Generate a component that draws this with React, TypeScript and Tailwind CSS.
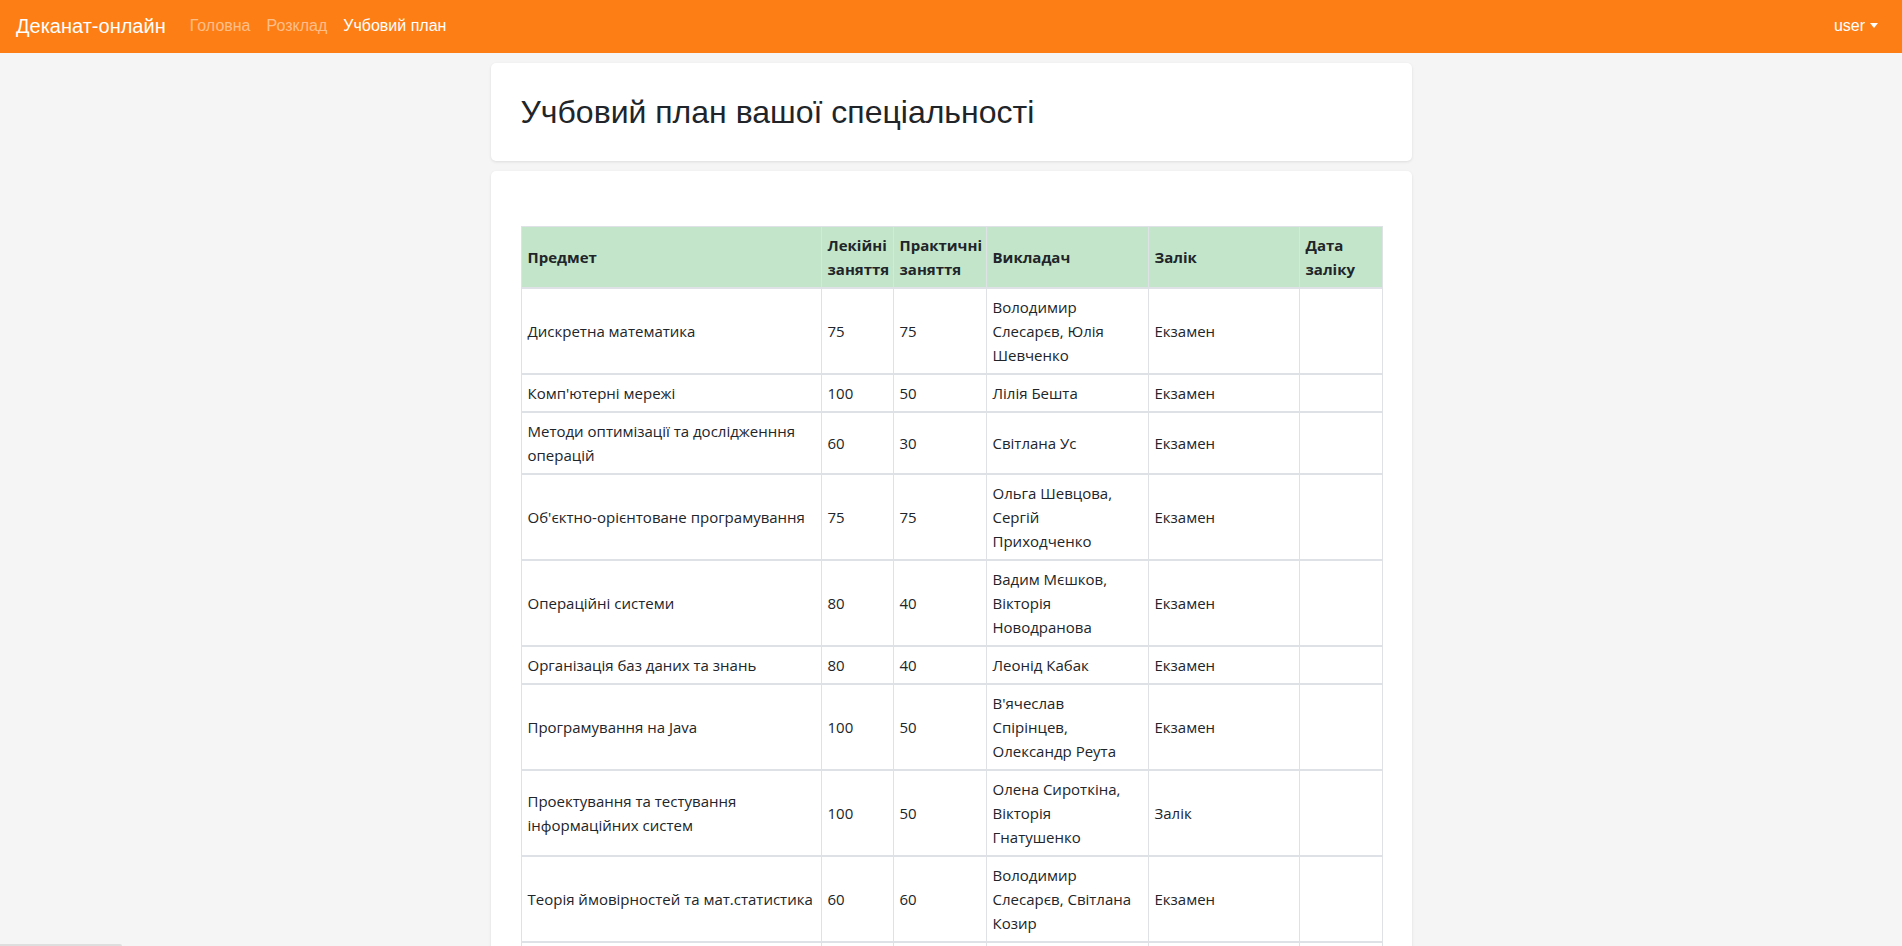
import React from "react";

type Row = { subject: string[]; lec: string; prac: string; teacher: string[]; exam: string };

const rows: Row[] = [
  { subject: ["Дискретна математика"], lec: "75", prac: "75", teacher: ["Володимир", "Слесарєв, Юлія", "Шевченко"], exam: "Екзамен" },
  { subject: ["Комп'ютерні мережі"], lec: "100", prac: "50", teacher: ["Лілія Бешта"], exam: "Екзамен" },
  { subject: ["Методи оптимізації та дослідженння", "операцій"], lec: "60", prac: "30", teacher: ["Світлана Ус"], exam: "Екзамен" },
  { subject: ["Об'єктно-орієнтоване програмування"], lec: "75", prac: "75", teacher: ["Ольга Шевцова,", "Сергій", "Приходченко"], exam: "Екзамен" },
  { subject: ["Операційні системи"], lec: "80", prac: "40", teacher: ["Вадим Мєшков,", "Вікторія", "Новодранова"], exam: "Екзамен" },
  { subject: ["Організація баз даних та знань"], lec: "80", prac: "40", teacher: ["Леонід Кабак"], exam: "Екзамен" },
  { subject: ["Програмування на Java"], lec: "100", prac: "50", teacher: ["В'ячеслав", "Спірінцев,", "Олександр Реута"], exam: "Екзамен" },
  { subject: ["Проектування та тестування", "інформаційних систем"], lec: "100", prac: "50", teacher: ["Олена Сироткіна,", "Вікторія", "Гнатушенко"], exam: "Залік" },
  { subject: ["Теорія ймовірностей та мат.статистика"], lec: "60", prac: "60", teacher: ["Володимир", "Слесарєв, Світлана", "Козир"], exam: "Екзамен" },
];

function Lines({ lines }: { lines: string[] }) {
  return (
    <>
      {lines.map((l, i) => (
        <React.Fragment key={i}>
          {i > 0 && <br />}
          {l}
        </React.Fragment>
      ))}
    </>
  );
}

const th = "border border-[#dee2e6] border-b-2 px-1.5 py-1.5 align-middle text-left font-bold whitespace-nowrap";
const td = "border border-[#dee2e6] border-t-2 px-1.5 py-1.5 align-middle whitespace-nowrap";

export default function App() {
  return (
    <div className="min-h-[946px] bg-[#f5f5f5]">
      <nav className="flex h-[53px] items-center bg-[#fd7e14] px-4 font-['Liberation_Sans',Arial,sans-serif]">
        <span className="mr-4 -mt-[2px] text-[20px] leading-[30px] text-white">Деканат-онлайн</span>
        <div className="-mt-[2px] flex items-center text-[16px] leading-6">
          <span className="px-2 text-white/50">Головна</span>
          <span className="px-2 text-white/50">Розклад</span>
          <span className="px-2 text-white">Учбовий план</span>
        </div>
        <div className="ml-auto -mt-[2px] flex items-center px-2 text-[16px] leading-6 text-white">
          <span>user</span>
          <span className="ml-[5px] inline-block h-0 w-0 border-x-[4.8px] border-t-[5px] border-x-transparent border-t-white" />
        </div>
      </nav>

      <main className="mx-auto flex w-[921px] flex-col gap-[10px] pt-[10px]">
        <div className="rounded-[5px] bg-white px-[30px] py-[30px] shadow-[0_1px_3px_rgba(0,0,0,0.1)]">
          <h1 className="font-['Liberation_Sans',Arial,sans-serif] text-[32px] font-normal leading-[1.2] text-[#212529]">
            Учбовий план вашої спеціальності
          </h1>
        </div>

        <div className="rounded-[5px] bg-white px-[30px] pt-[55px] pb-[30px] shadow-[0_1px_3px_rgba(0,0,0,0.1)]">
          <table className="w-[861px] table-fixed border-collapse border border-[#dee2e6] font-['Open_Sans','Noto_Sans',sans-serif] text-[15px] leading-6 text-[#212529]">
            <colgroup>
              <col className="w-[300px]" />
              <col className="w-[72px]" />
              <col className="w-[93px]" />
              <col className="w-[162px]" />
              <col className="w-[151px]" />
              <col className="w-[83px]" />
            </colgroup>
            <thead>
              <tr className="bg-[#c3e6cb]">
                <th className={th}>Предмет</th>
                <th className={th}>Лекійні<br />заняття</th>
                <th className={th}>Практичні<br />заняття</th>
                <th className={th}>Викладач</th>
                <th className={th}>Залік</th>
                <th className={th}>Дата<br />заліку</th>
              </tr>
            </thead>
            <tbody>
              {rows.map((r, i) => (
                <tr key={i}>
                  <td className={td}><Lines lines={r.subject} /></td>
                  <td className={td}>{r.lec}</td>
                  <td className={td}>{r.prac}</td>
                  <td className={td}><Lines lines={r.teacher} /></td>
                  <td className={td}>{r.exam}</td>
                  <td className={td}></td>
                </tr>
              ))}
              <tr className="h-[86px]">
                <td className={td}></td>
                <td className={td}></td>
                <td className={td}></td>
                <td className={td}></td>
                <td className={td}></td>
                <td className={td}></td>
              </tr>
            </tbody>
          </table>
        </div>
      </main>
      <div className="fixed bottom-0 left-0 h-[2px] w-[122px] rounded-tr-[2px] bg-[#dedede]" />
    </div>
  );
}
